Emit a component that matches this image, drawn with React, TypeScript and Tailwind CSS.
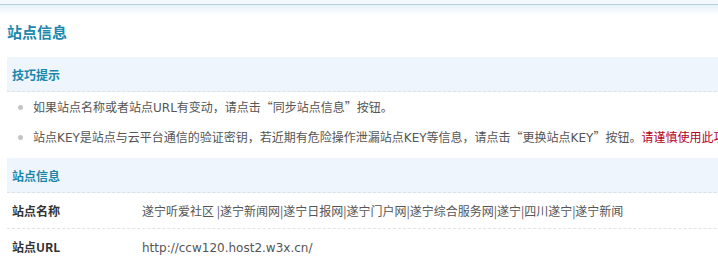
import React from "react";

const latin = "font-['DejaVu_Sans',sans-serif]";

const tips = [
  <>
    如果站点名称或者站点<span className={latin}>URL</span>有变动，请点击“同步站点信息”按钮。
  </>,
  <>
    站点<span className={latin}>KEY</span>是站点与云平台通信的验证密钥，若近期有危险操作泄漏站点
    <span className={latin}>KEY</span>等信息，请点击“更换站点<span className={latin}>KEY</span>”按钮。
    <span className="text-[#b5001e]">请谨慎使用此功能，更换后需重新配置。</span>
  </>,
];

const rows = [
  {
    label: "站点名称",
    value: "遂宁听爱社区 |遂宁新闻网|遂宁日报网|遂宁门户网|遂宁综合服务网|遂宁|四川遂宁|遂宁新闻",
  },
  { label: "站点URL", value: <span className={latin}>http://ccw120.host2.w3x.cn/</span> },
];

const SectionHeader = ({ title }: { title: string }) => (
  <div className="h-[35px] bg-[#eff5fc] border-b border-dashed border-[#d8e1e8] pl-[5px] leading-[35px] text-[12px] font-bold text-[#1a86aa]">
    {title}
  </div>
);

export default function App() {
  return (
    <div className="w-[718px] h-[265px] overflow-hidden bg-white font-['Noto_Sans_CJK_SC',sans-serif] text-[12px] text-[#555]">
      <div className="h-[5px] bg-[#f3f8fc] border-b border-[#b7d0d9]" />
      <div className="h-[10px] bg-gradient-to-b from-[#e6f1fa] to-white" />

      <h1 className="mt-[7px] mb-[15px] pl-[7px] text-[15px] leading-[20px] font-bold text-[#2088ae]">站点信息</h1>

      <div className="ml-[7px] w-[900px]">
        <SectionHeader title="技巧提示" />
        <ul className="mb-[6px]">
          {tips.map((tip, i) => (
            <li key={i} className="flex items-center h-[30px] whitespace-nowrap">
              <span className="ml-[11px] mr-[10px] w-[5px] h-[5px] rounded-full bg-[#c4c4c4]" />
              <span>{tip}</span>
            </li>
          ))}
        </ul>

        <SectionHeader title="站点信息" />
        {rows.map((row, i) => (
          <div
            key={row.label}
            className={`flex items-center h-[36px] whitespace-nowrap ${i < rows.length - 1 ? "border-b border-dashed border-[#dde4ea]" : ""}`}
          >
            <div className="w-[135px] pl-[5px] font-bold text-[#333]">{row.label}</div>
            <div>{row.value}</div>
          </div>
        ))}
      </div>
    </div>
  );
}
